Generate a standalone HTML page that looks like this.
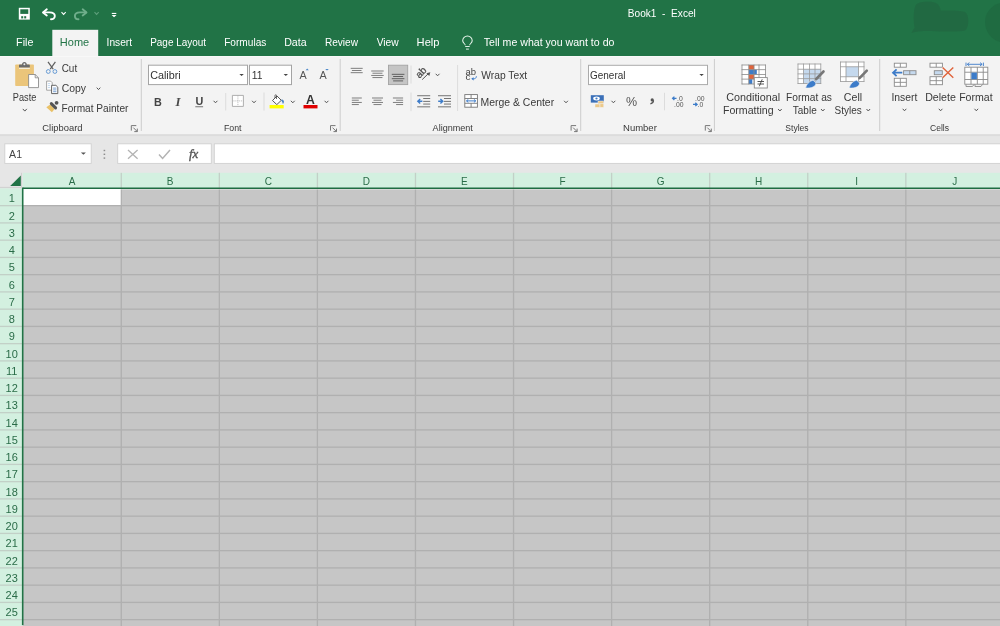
<!DOCTYPE html>
<html><head><meta charset="utf-8">
<style>
*{margin:0;padding:0}
html,body{width:1000px;height:626px;overflow:hidden;background:#e6e6e6}
svg{display:block;will-change:transform;font-family:"Liberation Sans",sans-serif}
</style></head><body>
<svg width="1000" height="626" viewBox="0 0 1000 626"><rect x="0" y="0" width="1000" height="56" fill="#217346"/><path d="M911.3 33 L914.6 27.5 C913.2 22 913.4 9 915.8 5 C918 2.2 923 1.8 929 1.8 C936 1.8 939.5 4 940.8 10.6 C950 10.4 959 10.4 964.5 11.8 C969.5 13.5 969.5 28 965 30.5 C960 32 946 31.6 936 31.2 C926 30.8 918 30.8 911.3 33 Z" fill="#216841" opacity="0.9"/><path d="M1000 3 C990 6 985 14 985 22 C985 32 992 40 1000 42 Z" fill="#1f6a41" opacity="0.85"/><rect x="18.8" y="7.8" width="11" height="11.8" fill="#fff"/><rect x="20.3" y="9.3" width="8" height="4.6" fill="#217346"/><rect x="21.2" y="16.2" width="2" height="2.2" fill="#217346"/><rect x="24.2" y="16.2" width="2" height="2.2" fill="#217346"/><path d="M43.5 12.4 H49.5 C52.8 12.4 54.8 14 54.8 16 C54.8 18 53 19.3 51 19.3" fill="none" stroke="#fff" stroke-width="1.9" stroke-linecap="round"/><path d="M46.8 9.3 L43 12.4 L46.8 15.4" fill="none" stroke="#fff" stroke-width="1.9" stroke-linecap="round" stroke-linejoin="round"/><path d="M61.50 12.20 L63.60 14.40 L65.70 12.20" fill="none" stroke="#fff" stroke-width="1.1"/><path d="M86 12.4 H80 C76.7 12.4 74.9 14 74.9 16 C74.9 18 76.5 19.3 78.5 19.3" fill="none" stroke="#6fae8b" stroke-width="1.9" stroke-linecap="round"/><path d="M82.7 9.3 L86.5 12.4 L82.7 15.4" fill="none" stroke="#6fae8b" stroke-width="1.9" stroke-linecap="round" stroke-linejoin="round"/><path d="M94.50 12.20 L96.60 14.40 L98.70 12.20" fill="none" stroke="#5e9f7b" stroke-width="1.1"/><rect x="111.8" y="12.9" width="4.5" height="1.1" fill="#fff"/><path d="M111.6 14.9 H116.5 L114.05 17.2 Z" fill="#fff"/><text x="627.79" y="17" font-size="10.2" fill="#fff" textLength="68.07" lengthAdjust="spacingAndGlyphs" >Book1 &#160;-&#160; Excel</text><rect x="52.3" y="29.8" width="45.9" height="27" fill="#f3f3f3"/><text x="16.14" y="46" font-size="10.3" fill="#fff" textLength="17.30" lengthAdjust="spacingAndGlyphs" >File</text><text x="106.58" y="46" font-size="10.3" fill="#fff" textLength="25.48" lengthAdjust="spacingAndGlyphs" >Insert</text><text x="150.20" y="46" font-size="10.3" fill="#fff" textLength="55.85" lengthAdjust="spacingAndGlyphs" >Page Layout</text><text x="224.19" y="46" font-size="10.3" fill="#fff" textLength="42.14" lengthAdjust="spacingAndGlyphs" >Formulas</text><text x="284.15" y="46" font-size="10.3" fill="#fff" textLength="22.52" lengthAdjust="spacingAndGlyphs" >Data</text><text x="324.89" y="46" font-size="10.3" fill="#fff" textLength="33.10" lengthAdjust="spacingAndGlyphs" >Review</text><text x="376.65" y="46" font-size="10.3" fill="#fff" textLength="22.05" lengthAdjust="spacingAndGlyphs" >View</text><text x="416.61" y="46" font-size="10.3" fill="#fff" textLength="22.85" lengthAdjust="spacingAndGlyphs" >Help</text><text x="483.79" y="46" font-size="10.3" fill="#fff" textLength="130.64" lengthAdjust="spacingAndGlyphs" >Tell me what you want to do</text><text x="59.82" y="46" font-size="10.3" fill="#217346" textLength="29.35" lengthAdjust="spacingAndGlyphs" >Home</text><path d="M465.3 45.3 C465.3 43.8 462.7 43 462.7 40.8 A4.75 4.75 0 1 1 472.2 40.8 C472.2 43 469.6 43.8 469.6 45.3" fill="none" stroke="#e8f5ec" stroke-width="1.05"/><path d="M465.2 46.5 H469.7 M466 49.1 H468.9" stroke="#e8f5ec" stroke-width="0.95"/><rect x="0" y="56" width="1000" height="78.2" fill="#f3f3f3"/><rect x="0" y="56" width="1000" height="1" fill="#f8f8f8"/><rect x="0" y="134" width="1000" height="38.5" fill="#e6e6e6"/><rect x="0" y="134.3" width="1000" height="1.8" fill="#dcdcdc"/><rect x="15.2" y="64.5" width="18.7" height="21.5" rx="0.8" fill="#ebc57a"/><rect x="19" y="67.5" width="10.8" height="1.4" fill="#f6f0e2"/><path d="M19 67.6 V65 C19 64.6 19.3 64.4 19.7 64.4 H22 C22 62.9 23 61.9 24.4 61.9 C25.8 61.9 26.8 62.9 26.8 64.4 H29.1 C29.5 64.4 29.8 64.6 29.8 65 V67.6 Z" fill="#6a6a6a"/><circle cx="24.4" cy="64.2" r="1" fill="#e8e8e8"/><path d="M28.6 74.5 H35.2 L38.5 77.8 V87.6 H28.6 Z" fill="#fff" stroke="#808080" stroke-width="0.8"/><path d="M35.2 74.5 V77.8 H38.5" fill="none" stroke="#808080" stroke-width="0.8"/><text x="12.86" y="100.8" font-size="10.3" fill="#3a3a3a" textLength="23.52" lengthAdjust="spacingAndGlyphs" >Paste</text><path d="M22.80 108.90 L24.80 111.10 L26.80 108.90" fill="none" stroke="#555" stroke-width="1"/><path d="M48 61.8 L53.2 69.2 M55.4 61.8 L50.2 69.2" stroke="#5f5f5f" stroke-width="1.2"/><circle cx="48.3" cy="71.5" r="1.9" fill="none" stroke="#5f96d2" stroke-width="0.95"/><circle cx="54.9" cy="71.5" r="1.9" fill="none" stroke="#5f96d2" stroke-width="0.95"/><text x="61.70" y="71.9" font-size="10.3" fill="#3a3a3a" textLength="15.46" lengthAdjust="spacingAndGlyphs" >Cut</text><path d="M46.6 81.1 H50.6 L52.2 82.7 V90.2 H46.6 Z" fill="#fff" stroke="#8f8f8f" stroke-width="0.8"/><path d="M47.9 83.6 H50.2 M47.9 85.6 H50.2 M47.9 87.6 H50.2" stroke="#a9c6e6" stroke-width="0.7"/><path d="M51.6 85.3 H55.9 L57.8 87.2 V93.6 H51.6 Z" fill="#fff" stroke="#555" stroke-width="0.9"/><path d="M53.1 88.1 H56.4 M53.1 89.9 H56.4 M53.1 91.7 H56.4" stroke="#5a8ac6" stroke-width="0.8"/><text x="61.68" y="91.6" font-size="10.3" fill="#3a3a3a" textLength="24.32" lengthAdjust="spacingAndGlyphs" >Copy</text><path d="M96.70 87.65 L98.50 89.55 L100.30 87.65" fill="none" stroke="#555" stroke-width="1"/><path d="M46.3 107.3 L50.2 104.6 L54.6 109.1 L51.9 112.3 Z" fill="#e9c168"/><path d="M51.3 103.6 L55.6 107.9" stroke="#555" stroke-width="3" stroke-linecap="round"/><circle cx="56.6" cy="102.8" r="1.9" fill="#555"/><text x="61.49" y="111.9" font-size="10.3" fill="#3a3a3a" textLength="66.95" lengthAdjust="spacingAndGlyphs" >Format Painter</text><text x="42.33" y="131.3" font-size="9.2" fill="#383838" textLength="40.24" lengthAdjust="spacingAndGlyphs" >Clipboard</text><path d="M131.3 130.6 V125.6 H136.3" fill="none" stroke="#777" stroke-width="1"/><path d="M133.3 127.6 L137.3 131.6 M137.3 128.6 V131.6 H134.3" fill="none" stroke="#777" stroke-width="1"/><rect x="140.8" y="59" width="1" height="72" fill="#cdcdcd"/><rect x="148.5" y="65.2" width="99" height="19.4" fill="#fff" stroke="#a4a4a4" stroke-width="1"/><rect x="249.5" y="65.2" width="42" height="19.4" fill="#fff" stroke="#a4a4a4" stroke-width="1"/><text x="150.16" y="78.7" font-size="10.3" fill="#333" textLength="30.59" lengthAdjust="spacingAndGlyphs" >Calibri</text><text x="251.8" y="78.7" font-size="10.3" fill="#333" >11</text><path d="M239.40 73.90 L243.80 73.90 L241.60 76.10 Z" fill="#444"/><path d="M283.60 73.90 L288.00 73.90 L285.80 76.10 Z" fill="#444"/><text x="299.60" y="78.9" font-size="11" fill="#555" textLength="7.22" lengthAdjust="spacingAndGlyphs" >A</text><path d="M305.6 70.2 L307.2 68.6 L308.8 70.2 Z" fill="#4a86c8"/><text x="319.60" y="79.3" font-size="11" fill="#555" textLength="7.22" lengthAdjust="spacingAndGlyphs" >A</text><path d="M325.2 68.9 L328.8 68.9 L327 70.5 Z" fill="#4a86c8"/><text x="154" y="105.8" font-size="10.8" fill="#444" font-weight="bold">B</text><text x="175.4" y="106.2" font-size="12.8" fill="#4a4a4a" font-weight="bold" font-style="italic" font-family="Liberation Serif">I</text><text x="195.5" y="105.2" font-size="10.8" fill="#444" font-weight="bold">U</text><rect x="195.3" y="106.4" width="7.8" height="0.8" fill="#555"/><path d="M213.60 100.80 L215.50 102.80 L217.40 100.80" fill="none" stroke="#555" stroke-width="1"/><rect x="225.2" y="93" width="1" height="17.5" fill="#dcdcdc"/><path d="M232.4 95.4 H243.4 V106.4 H232.4 Z" fill="#fff" stroke="#a6a6a6" stroke-width="0.9"/><path d="M237.9 95.4 V106.4 M232.4 100.9 H243.4" stroke="#b0b0b0" stroke-width="0.8" stroke-dasharray="1.2 0.9"/><path d="M252.10 100.80 L254.00 102.80 L255.90 100.80" fill="none" stroke="#555" stroke-width="1"/><rect x="263.5" y="92.5" width="1" height="18.099999999999994" fill="#dcdcdc"/><path d="M272.5 100.5 L277 96 L281.3 100.3 L276.8 104.6 Z" fill="#fff" stroke="#444" stroke-width="0.9"/><path d="M275 98 V95.5 C275 94.5 276.5 94.5 276.5 95.5 V99" fill="none" stroke="#444" stroke-width="0.8"/><path d="M281.3 100.3 C283.5 99 283.8 102 283 103.5" fill="#4a86c8" stroke="#4a86c8" stroke-width="1"/><rect x="269.6" y="105" width="14.1" height="3.4" fill="#ffff00"/><path d="M290.90 100.80 L292.80 102.80 L294.70 100.80" fill="none" stroke="#555" stroke-width="1"/><text x="306.00" y="104" font-size="12.4" fill="#333" textLength="8.83" lengthAdjust="spacingAndGlyphs" font-weight="bold">A</text><rect x="303.5" y="105" width="14" height="3.4" fill="#e00000"/><path d="M324.60 100.80 L326.50 102.80 L328.40 100.80" fill="none" stroke="#555" stroke-width="1"/><text x="224.00" y="131.3" font-size="9.2" fill="#383838" textLength="17.55" lengthAdjust="spacingAndGlyphs" >Font</text><path d="M330.5 130.6 V125.6 H335.5" fill="none" stroke="#777" stroke-width="1"/><path d="M332.5 127.6 L336.5 131.6 M336.5 128.6 V131.6 H333.5" fill="none" stroke="#777" stroke-width="1"/><rect x="339.7" y="59" width="1" height="72" fill="#cdcdcd"/><rect x="350.70" y="67.85" width="12" height="0.9" fill="#727272"/><rect x="351.90" y="70.05" width="9.6" height="0.9" fill="#727272"/><rect x="350.70" y="72.25" width="12" height="0.9" fill="#727272"/><rect x="371.20" y="70.55" width="12.5" height="0.9" fill="#727272"/><rect x="372.45" y="72.75" width="10" height="0.9" fill="#727272"/><rect x="371.20" y="74.95" width="12.5" height="0.9" fill="#727272"/><rect x="372.45" y="77.15" width="10" height="0.9" fill="#727272"/><rect x="388.5" y="65.2" width="19.2" height="19.4" fill="#c5c5c5" stroke="#a3a3a3" stroke-width="0.9"/><rect x="391.80" y="73.85" width="12.6" height="0.9" fill="#555"/><rect x="393.10" y="76.05" width="10" height="0.9" fill="#555"/><rect x="391.80" y="78.25" width="12.6" height="0.9" fill="#555"/><rect x="393.10" y="80.45" width="10" height="0.9" fill="#555"/><rect x="410.5" y="65.5" width="1" height="18.099999999999994" fill="#dcdcdc"/><text x="0" y="0" font-size="10" fill="#4a4a4a" stroke="#4a4a4a" stroke-width="0.25" transform="translate(419.4 78.8) rotate(-45)">ab</text><path d="M422.2 79.6 L428.6 73.4" fill="none" stroke="#555" stroke-width="1"/><path d="M430.3 72.2 L426.4 73.2 L429.3 76.1 Z" fill="#555"/><path d="M435.70 73.80 L437.60 75.80 L439.50 73.80" fill="none" stroke="#555" stroke-width="1"/><rect x="351.80" y="97.55" width="10" height="0.9" fill="#727272"/><rect x="351.80" y="99.75" width="7" height="0.9" fill="#727272"/><rect x="351.80" y="101.95" width="10" height="0.9" fill="#727272"/><rect x="351.80" y="104.15" width="7" height="0.9" fill="#727272"/><rect x="372.00" y="97.55" width="11" height="0.9" fill="#727272"/><rect x="373.50" y="99.75" width="8" height="0.9" fill="#727272"/><rect x="372.00" y="101.95" width="11" height="0.9" fill="#727272"/><rect x="373.50" y="104.15" width="8" height="0.9" fill="#727272"/><rect x="392.90" y="97.55" width="10.2" height="0.9" fill="#727272"/><rect x="396.10" y="99.75" width="7" height="0.9" fill="#727272"/><rect x="392.90" y="101.95" width="10.2" height="0.9" fill="#727272"/><rect x="396.10" y="104.15" width="7" height="0.9" fill="#727272"/><rect x="410.5" y="92.5" width="1" height="18.700000000000003" fill="#dcdcdc"/><rect x="417.2" y="95.3" width="13" height="0.9" fill="#666"/><rect x="417.2" y="106.4" width="13" height="0.9" fill="#666"/><rect x="423.2" y="98.1" width="7" height="0.9" fill="#666"/><rect x="423.2" y="100.9" width="7" height="0.9" fill="#666"/><rect x="423.2" y="103.6" width="7" height="0.9" fill="#666"/><path d="M422.4 101.3 H418.0 M420.2 99 L417.8 101.3 L420.2 103.6" fill="none" stroke="#3d7cc9" stroke-width="1.4"/><rect x="438" y="95.3" width="13" height="0.9" fill="#666"/><rect x="438" y="106.4" width="13" height="0.9" fill="#666"/><rect x="444" y="98.1" width="7" height="0.9" fill="#666"/><rect x="444" y="100.9" width="7" height="0.9" fill="#666"/><rect x="444" y="103.6" width="7" height="0.9" fill="#666"/><path d="M438.2 101.3 H442.6 M440.4 99 L442.8 101.3 L440.4 103.6" fill="none" stroke="#3d7cc9" stroke-width="1.4"/><rect x="457.1" y="65" width="1" height="46" fill="#dcdcdc"/><text x="465.42" y="74.6" font-size="8.6" fill="#444" textLength="10.58" lengthAdjust="spacingAndGlyphs" >ab</text><text x="465.40" y="79.6" font-size="8.6" fill="#444" textLength="4.94" lengthAdjust="spacingAndGlyphs" >c</text><path d="M476.4 76.2 C476.4 78 475.3 78.8 473.6 78.8 H472.4" fill="none" stroke="#3d7cc9" stroke-width="0.9"/><path d="M471.2 78.8 L473.6 77.2 L473.6 80.4 Z" fill="#3d7cc9"/><text x="481.35" y="78.8" font-size="10.3" fill="#3a3a3a" textLength="45.85" lengthAdjust="spacingAndGlyphs" >Wrap Text</text><rect x="464.8" y="94.6" width="12.6" height="12.6" fill="#fff" stroke="#777" stroke-width="0.9"/><path d="M464.8 98.5 H477.4 M464.8 103.3 H477.4 M471.1 94.6 V98.5 M471.1 103.3 V107.2" stroke="#777" stroke-width="0.9"/><path d="M466.5 100.9 H475.7 M468.3 99.4 L466.5 100.9 L468.3 102.4 M473.9 99.4 L475.7 100.9 L473.9 102.4" fill="none" stroke="#3d7cc9" stroke-width="1"/><text x="480.57" y="105.5" font-size="10.3" fill="#3a3a3a" textLength="73.58" lengthAdjust="spacingAndGlyphs" >Merge &amp; Center</text><path d="M564.10 100.80 L566.00 102.80 L567.90 100.80" fill="none" stroke="#555" stroke-width="1"/><text x="432.60" y="131.3" font-size="9.2" fill="#383838" textLength="40.26" lengthAdjust="spacingAndGlyphs" >Alignment</text><path d="M571.1 130.6 V125.6 H576.1" fill="none" stroke="#777" stroke-width="1"/><path d="M573.1 127.6 L577.1 131.6 M577.1 128.6 V131.6 H574.1" fill="none" stroke="#777" stroke-width="1"/><rect x="580.2" y="59" width="1" height="72" fill="#cdcdcd"/><rect x="588.5" y="65.3" width="119" height="19.3" fill="#fff" stroke="#aaa" stroke-width="1"/><text x="590.00" y="78.7" font-size="10.3" fill="#333" textLength="35.47" lengthAdjust="spacingAndGlyphs" >General</text><path d="M699.40 73.90 L703.80 73.90 L701.60 76.10 Z" fill="#444"/><rect x="590.8" y="95.2" width="13" height="7.4" fill="#3b70b8"/><ellipse cx="596.5" cy="98.5" rx="3.3" ry="1.9" fill="#fff"/><circle cx="596.5" cy="98.5" r="1.1" fill="#3d7cc9"/><rect x="598" y="101" width="5.5" height="3" fill="#ecc98a" stroke="#f3f3f3" stroke-width="0.5"/><rect x="595" y="104" width="5" height="3.4" fill="#ecc98a" stroke="#f3f3f3" stroke-width="0.5"/><rect x="600" y="103.8" width="3.8" height="3.6" fill="#ecc98a" stroke="#f3f3f3" stroke-width="0.5"/><path d="M611.50 100.80 L613.40 102.80 L615.30 100.80" fill="none" stroke="#555" stroke-width="1"/><text x="626" y="106.3" font-size="12.5" fill="#555" >%</text><circle cx="652.2" cy="99.9" r="1.6" fill="#555"/><path d="M653.5 100.2 C653.6 101.9 652.5 103.2 650.4 103.8" fill="none" stroke="#555" stroke-width="1.2"/><rect x="664.0" y="92.8" width="1" height="17.5" fill="#dcdcdc"/><path d="M676.5 98.3 H672.6 M674.4 96.6 L672.6 98.3 L674.4 100" fill="none" stroke="#3d7cc9" stroke-width="1.3"/><text x="677" y="101.2" font-size="6.8" fill="#555" >.0</text><text x="674" y="107" font-size="6.8" fill="#555" >.00</text><text x="695" y="101.2" font-size="6.8" fill="#555" >.00</text><path d="M693 104.4 H697 M695.3 102.7 L697.1 104.4 L695.3 106.1" fill="none" stroke="#3d7cc9" stroke-width="1.3"/><text x="697.6" y="107" font-size="6.8" fill="#555" >.0</text><text x="623.04" y="131.3" font-size="9.2" fill="#383838" textLength="33.77" lengthAdjust="spacingAndGlyphs" >Number</text><path d="M705.3 130.6 V125.6 H710.3" fill="none" stroke="#777" stroke-width="1"/><path d="M707.3 127.6 L711.3 131.6 M711.3 128.6 V131.6 H708.3" fill="none" stroke="#777" stroke-width="1"/><rect x="713.9" y="59" width="1" height="72" fill="#cdcdcd"/><rect x="742" y="65" width="23.5" height="19" fill="#fff"/><rect x="748.8" y="65" width="5.3" height="4.7" fill="#e0643c"/><rect x="748.8" y="69.7" width="8" height="4.7" fill="#3d7cc9"/><rect x="748.8" y="74.4" width="5.3" height="4.7" fill="#e0643c"/><rect x="748.8" y="79.1" width="3.5" height="4.9" fill="#3d7cc9"/><rect x="741.60" y="64.60" width="0.8" height="19.80" fill="#8a8a8a"/><rect x="748.40" y="64.60" width="0.8" height="19.80" fill="#8a8a8a"/><rect x="753.60" y="64.60" width="0.8" height="19.80" fill="#8a8a8a"/><rect x="758.60" y="64.60" width="0.8" height="19.80" fill="#8a8a8a"/><rect x="765.10" y="64.60" width="0.8" height="19.80" fill="#8a8a8a"/><rect x="741.60" y="64.60" width="24.30" height="0.8" fill="#8a8a8a"/><rect x="741.60" y="69.30" width="24.30" height="0.8" fill="#8a8a8a"/><rect x="741.60" y="74.00" width="24.30" height="0.8" fill="#8a8a8a"/><rect x="741.60" y="78.70" width="24.30" height="0.8" fill="#8a8a8a"/><rect x="741.60" y="83.60" width="24.30" height="0.8" fill="#8a8a8a"/><rect x="754.3" y="77.6" width="13" height="10.4" fill="#fff" stroke="#8a8a8a" stroke-width="0.9"/><path d="M757.5 81.5 H764 M757.5 84 H764 M762.2 79.3 L759.3 86.3" stroke="#444" stroke-width="0.9"/><text x="726.26" y="100.6" font-size="10.3" fill="#3a3a3a" textLength="53.88" lengthAdjust="spacingAndGlyphs" >Conditional</text><text x="722.95" y="114.3" font-size="10.3" fill="#3a3a3a" textLength="50.68" lengthAdjust="spacingAndGlyphs" >Formatting</text><path d="M778.10 109.00 L779.90 111.00 L781.70 109.00" fill="none" stroke="#555" stroke-width="1"/><rect x="798" y="64" width="22.8" height="19.5" fill="#fff"/><rect x="803.6" y="69.2" width="17.2" height="14.3" fill="#c5d9ee"/><rect x="797.60" y="63.60" width="0.8" height="20.30" fill="#999"/><rect x="803.20" y="63.60" width="0.8" height="20.30" fill="#999"/><rect x="809.00" y="63.60" width="0.8" height="20.30" fill="#999"/><rect x="814.60" y="63.60" width="0.8" height="20.30" fill="#999"/><rect x="820.40" y="63.60" width="0.8" height="20.30" fill="#999"/><rect x="797.60" y="63.60" width="23.60" height="0.8" fill="#999"/><rect x="797.60" y="68.80" width="23.60" height="0.8" fill="#999"/><rect x="797.60" y="73.50" width="23.60" height="0.8" fill="#999"/><rect x="797.60" y="78.30" width="23.60" height="0.8" fill="#999"/><rect x="797.60" y="83.10" width="23.60" height="0.8" fill="#999"/><path d="M823.5 71.5 L816.2 79" stroke="#777" stroke-width="2.6" stroke-linecap="round"/><path d="M805.6 88 C806.5 84 809.5 81 813 80.2 L816 83 C815.6 86.5 812 88.4 805.6 88 Z" fill="#3d7cc9" stroke="#f3f3f3" stroke-width="0.6"/><text x="786.08" y="100.6" font-size="10.3" fill="#3a3a3a" textLength="45.88" lengthAdjust="spacingAndGlyphs" >Format as</text><text x="792.80" y="114.3" font-size="10.3" fill="#3a3a3a" textLength="23.91" lengthAdjust="spacingAndGlyphs" >Table</text><path d="M821.00 109.00 L822.80 111.00 L824.60 109.00" fill="none" stroke="#555" stroke-width="1"/><rect x="840.5" y="62" width="23.5" height="19.4" fill="#fff"/><rect x="846" y="66.8" width="12.5" height="10" fill="#c5d9ee"/><rect x="840.10" y="61.60" width="0.8" height="20.20" fill="#999"/><rect x="845.60" y="61.60" width="0.8" height="20.20" fill="#999"/><rect x="858.10" y="61.60" width="0.8" height="20.20" fill="#999"/><rect x="863.60" y="61.60" width="0.8" height="20.20" fill="#999"/><rect x="840.10" y="61.60" width="24.30" height="0.8" fill="#999"/><rect x="840.10" y="66.40" width="24.30" height="0.8" fill="#999"/><rect x="840.10" y="76.40" width="24.30" height="0.8" fill="#999"/><rect x="840.10" y="81.00" width="24.30" height="0.8" fill="#999"/><path d="M866.8 70.6 L859.5 78.2" stroke="#777" stroke-width="2.6" stroke-linecap="round"/><path d="M849.2 88 C850.1 84 853.1 81 856.6 80.2 L859.6 83 C859.2 86.5 855.6 88.4 849.2 88 Z" fill="#3d7cc9" stroke="#f3f3f3" stroke-width="0.6"/><text x="843.87" y="100.6" font-size="10.3" fill="#3a3a3a" textLength="18.25" lengthAdjust="spacingAndGlyphs" >Cell</text><text x="834.55" y="114.3" font-size="10.3" fill="#3a3a3a" textLength="27.18" lengthAdjust="spacingAndGlyphs" >Styles</text><path d="M866.50 109.00 L868.30 111.00 L870.10 109.00" fill="none" stroke="#555" stroke-width="1"/><text x="785.32" y="131.3" font-size="9.2" fill="#383838" textLength="23.27" lengthAdjust="spacingAndGlyphs" >Styles</text><rect x="879.2" y="59" width="1" height="72" fill="#cdcdcd"/><rect x="894.3" y="63.2" width="12" height="4" fill="#fff" stroke="#8a8a8a" stroke-width="0.9"/><rect x="899.85" y="63.2" width="0.9" height="4" fill="#8a8a8a"/><rect x="903.6" y="70.7" width="12.4" height="4" fill="#c5d9ee" stroke="#8a8a8a" stroke-width="0.9"/><rect x="909.35" y="70.7" width="0.9" height="4" fill="#8a8a8a"/><path d="M902.3 72.7 H893.5 M896.6 69.3 L893 72.7 L896.6 76.1" fill="none" stroke="#3d7cc9" stroke-width="1.8"/><rect x="894.3" y="78.3" width="12" height="8" fill="#fff" stroke="#8a8a8a" stroke-width="0.9"/><rect x="899.85" y="78.3" width="0.9" height="8" fill="#8a8a8a"/><rect x="894.3" y="81.85" width="12" height="0.9" fill="#8a8a8a"/><text x="891.46" y="100.6" font-size="10.3" fill="#3a3a3a" textLength="26.00" lengthAdjust="spacingAndGlyphs" >Insert</text><path d="M902.70 108.80 L904.50 110.80 L906.30 108.80" fill="none" stroke="#555" stroke-width="1"/><rect x="930" y="63.2" width="12.4" height="4" fill="#fff" stroke="#8a8a8a" stroke-width="0.9"/><rect x="935.75" y="63.2" width="0.9" height="4" fill="#8a8a8a"/><rect x="934.3" y="70.7" width="8" height="4" fill="#c5d9ee" stroke="#8a8a8a" stroke-width="0.9"/><rect x="930" y="76.7" width="12.4" height="8" fill="#fff" stroke="#8a8a8a" stroke-width="0.9"/><rect x="935.75" y="76.7" width="0.9" height="8" fill="#8a8a8a"/><rect x="930" y="80.25" width="12.4" height="0.9" fill="#8a8a8a"/><path d="M942.6 67.4 L953.3 77.8 M953.3 67.4 L942.6 77.8" stroke="#f3f3f3" stroke-width="2.6"/><path d="M942.6 67.4 L953.3 77.8 M953.3 67.4 L942.6 77.8" stroke="#e0643c" stroke-width="1.4"/><text x="925.15" y="100.6" font-size="10.3" fill="#3a3a3a" textLength="30.79" lengthAdjust="spacingAndGlyphs" >Delete</text><path d="M938.80 108.80 L940.60 110.80 L942.40 108.80" fill="none" stroke="#555" stroke-width="1"/><path d="M966 62.6 V66 M983.4 62.6 V66 M967.3 64.3 H982.1 M969.4 62.6 L967.3 64.3 L969.4 66 M980 62.6 L982.1 64.3 L980 66" fill="none" stroke="#3d7cc9" stroke-width="0.9"/><rect x="964.8" y="67.2" width="23" height="17" fill="#fff" stroke="#8a8a8a" stroke-width="0.9"/><rect x="970.55" y="67.2" width="0.9" height="17" fill="#8a8a8a"/><rect x="976.8499999999999" y="67.2" width="0.9" height="17" fill="#8a8a8a"/><rect x="982.75" y="67.2" width="0.9" height="17" fill="#8a8a8a"/><rect x="964.8" y="71.75" width="23" height="0.9" fill="#8a8a8a"/><rect x="964.8" y="79.05" width="23" height="0.9" fill="#8a8a8a"/><rect x="971.4" y="72.6" width="5.5" height="6.6" fill="#3d7cc9"/><path d="M966 84.4 V86.5 H972.5 L974 84.4 M975 84.4 V86.5 H981 L982.5 84.4" fill="none" stroke="#8a8a8a" stroke-width="0.9"/><text x="959.15" y="100.6" font-size="10.3" fill="#3a3a3a" textLength="33.52" lengthAdjust="spacingAndGlyphs" >Format</text><path d="M974.50 108.80 L976.30 110.80 L978.10 108.80" fill="none" stroke="#555" stroke-width="1"/><text x="929.97" y="131.3" font-size="9.2" fill="#383838" textLength="19.01" lengthAdjust="spacingAndGlyphs" >Cells</text><rect x="4.8" y="143.8" width="86.4" height="19.6" fill="#fff" stroke="#d0d0d0" stroke-width="0.9"/><text x="9.10" y="158" font-size="10.2" fill="#444" textLength="12.91" lengthAdjust="spacingAndGlyphs" >A1</text><path d="M80.90 152.40 L85.90 152.40 L83.40 154.80 Z" fill="#555"/><rect x="103.6" y="149.8" width="1.6" height="1.4" fill="#8c8c8c"/><rect x="103.6" y="153.6" width="1.6" height="1.4" fill="#8c8c8c"/><rect x="103.6" y="157.4" width="1.6" height="1.4" fill="#8c8c8c"/><rect x="117.7" y="143.8" width="93.6" height="19.6" fill="#fff" stroke="#d0d0d0" stroke-width="0.9"/><path d="M128 150 L137.6 158.8 M137.6 150 L128 158.8" stroke="#b3b3b3" stroke-width="1.3"/><path d="M159 154.4 L162.6 158.4 L170 150" fill="none" stroke="#b3b3b3" stroke-width="1.5"/><text x="189" y="157.6" font-size="13" fill="#555" font-family="Liberation Serif" font-style="italic" stroke="#555" stroke-width="0.35">fx</text><rect x="214.3" y="143.8" width="800" height="19.6" fill="#fff" stroke="#d0d0d0" stroke-width="0.9"/><rect x="0" y="172.8" width="22.8" height="15.599999999999994" fill="#e6e6e6"/><path d="M10.2 186 L20.8 186 L20.8 175.4 Z" fill="#217346"/><rect x="22.8" y="172.8" width="977.2" height="15.599999999999994" fill="#d3f0e0"/><rect x="0" y="188.4" width="22.8" height="437.6" fill="#d3f0e0"/><rect x="22.8" y="188.4" width="977.2" height="437.6" fill="#c6c6c6"/><rect x="120.62" y="172.8" width="1.3" height="15.599999999999994" fill="#c2d0c7"/><rect x="120.62" y="188.4" width="1.3" height="437.6" fill="#b0b0b0"/><rect x="218.69" y="172.8" width="1.3" height="15.599999999999994" fill="#c2d0c7"/><rect x="218.69" y="188.4" width="1.3" height="437.6" fill="#b0b0b0"/><rect x="316.76" y="172.8" width="1.3" height="15.599999999999994" fill="#c2d0c7"/><rect x="316.76" y="188.4" width="1.3" height="437.6" fill="#b0b0b0"/><rect x="414.83" y="172.8" width="1.3" height="15.599999999999994" fill="#c2d0c7"/><rect x="414.83" y="188.4" width="1.3" height="437.6" fill="#b0b0b0"/><rect x="512.90" y="172.8" width="1.3" height="15.599999999999994" fill="#c2d0c7"/><rect x="512.90" y="188.4" width="1.3" height="437.6" fill="#b0b0b0"/><rect x="610.97" y="172.8" width="1.3" height="15.599999999999994" fill="#c2d0c7"/><rect x="610.97" y="188.4" width="1.3" height="437.6" fill="#b0b0b0"/><rect x="709.04" y="172.8" width="1.3" height="15.599999999999994" fill="#c2d0c7"/><rect x="709.04" y="188.4" width="1.3" height="437.6" fill="#b0b0b0"/><rect x="807.11" y="172.8" width="1.3" height="15.599999999999994" fill="#c2d0c7"/><rect x="807.11" y="188.4" width="1.3" height="437.6" fill="#b0b0b0"/><rect x="905.18" y="172.8" width="1.3" height="15.599999999999994" fill="#c2d0c7"/><rect x="905.18" y="188.4" width="1.3" height="437.6" fill="#b0b0b0"/><rect x="0" y="205.00" width="22.8" height="1.3" fill="#c2d0c7"/><rect x="22.8" y="205.00" width="977.2" height="1.3" fill="#b0b0b0"/><rect x="0" y="222.25" width="22.8" height="1.3" fill="#c2d0c7"/><rect x="22.8" y="222.25" width="977.2" height="1.3" fill="#b0b0b0"/><rect x="0" y="239.50" width="22.8" height="1.3" fill="#c2d0c7"/><rect x="22.8" y="239.50" width="977.2" height="1.3" fill="#b0b0b0"/><rect x="0" y="256.75" width="22.8" height="1.3" fill="#c2d0c7"/><rect x="22.8" y="256.75" width="977.2" height="1.3" fill="#b0b0b0"/><rect x="0" y="274.00" width="22.8" height="1.3" fill="#c2d0c7"/><rect x="22.8" y="274.00" width="977.2" height="1.3" fill="#b0b0b0"/><rect x="0" y="291.25" width="22.8" height="1.3" fill="#c2d0c7"/><rect x="22.8" y="291.25" width="977.2" height="1.3" fill="#b0b0b0"/><rect x="0" y="308.50" width="22.8" height="1.3" fill="#c2d0c7"/><rect x="22.8" y="308.50" width="977.2" height="1.3" fill="#b0b0b0"/><rect x="0" y="325.75" width="22.8" height="1.3" fill="#c2d0c7"/><rect x="22.8" y="325.75" width="977.2" height="1.3" fill="#b0b0b0"/><rect x="0" y="343.00" width="22.8" height="1.3" fill="#c2d0c7"/><rect x="22.8" y="343.00" width="977.2" height="1.3" fill="#b0b0b0"/><rect x="0" y="360.25" width="22.8" height="1.3" fill="#c2d0c7"/><rect x="22.8" y="360.25" width="977.2" height="1.3" fill="#b0b0b0"/><rect x="0" y="377.50" width="22.8" height="1.3" fill="#c2d0c7"/><rect x="22.8" y="377.50" width="977.2" height="1.3" fill="#b0b0b0"/><rect x="0" y="394.75" width="22.8" height="1.3" fill="#c2d0c7"/><rect x="22.8" y="394.75" width="977.2" height="1.3" fill="#b0b0b0"/><rect x="0" y="412.00" width="22.8" height="1.3" fill="#c2d0c7"/><rect x="22.8" y="412.00" width="977.2" height="1.3" fill="#b0b0b0"/><rect x="0" y="429.25" width="22.8" height="1.3" fill="#c2d0c7"/><rect x="22.8" y="429.25" width="977.2" height="1.3" fill="#b0b0b0"/><rect x="0" y="446.50" width="22.8" height="1.3" fill="#c2d0c7"/><rect x="22.8" y="446.50" width="977.2" height="1.3" fill="#b0b0b0"/><rect x="0" y="463.75" width="22.8" height="1.3" fill="#c2d0c7"/><rect x="22.8" y="463.75" width="977.2" height="1.3" fill="#b0b0b0"/><rect x="0" y="481.00" width="22.8" height="1.3" fill="#c2d0c7"/><rect x="22.8" y="481.00" width="977.2" height="1.3" fill="#b0b0b0"/><rect x="0" y="498.25" width="22.8" height="1.3" fill="#c2d0c7"/><rect x="22.8" y="498.25" width="977.2" height="1.3" fill="#b0b0b0"/><rect x="0" y="515.50" width="22.8" height="1.3" fill="#c2d0c7"/><rect x="22.8" y="515.50" width="977.2" height="1.3" fill="#b0b0b0"/><rect x="0" y="532.75" width="22.8" height="1.3" fill="#c2d0c7"/><rect x="22.8" y="532.75" width="977.2" height="1.3" fill="#b0b0b0"/><rect x="0" y="550.00" width="22.8" height="1.3" fill="#c2d0c7"/><rect x="22.8" y="550.00" width="977.2" height="1.3" fill="#b0b0b0"/><rect x="0" y="567.25" width="22.8" height="1.3" fill="#c2d0c7"/><rect x="22.8" y="567.25" width="977.2" height="1.3" fill="#b0b0b0"/><rect x="0" y="584.50" width="22.8" height="1.3" fill="#c2d0c7"/><rect x="22.8" y="584.50" width="977.2" height="1.3" fill="#b0b0b0"/><rect x="0" y="601.75" width="22.8" height="1.3" fill="#c2d0c7"/><rect x="22.8" y="601.75" width="977.2" height="1.3" fill="#b0b0b0"/><rect x="0" y="619.00" width="22.8" height="1.3" fill="#c2d0c7"/><rect x="22.8" y="619.00" width="977.2" height="1.3" fill="#b0b0b0"/><rect x="0" y="636.25" width="22.8" height="1.3" fill="#c2d0c7"/><rect x="22.8" y="636.25" width="977.2" height="1.3" fill="#b0b0b0"/><rect x="22.8" y="188.4" width="97.82" height="16.6" fill="#fff"/><rect x="22.8" y="189.0" width="977.2" height="0.9" fill="#fff" opacity="0.35"/><rect x="22.8" y="187.5" width="977.2" height="1.5" fill="#1f6c42"/><rect x="21.900000000000002" y="187.5" width="1.6" height="437.6" fill="#217346"/><rect x="0" y="186.9" width="21.900000000000002" height="1" fill="#d0d0d0"/><rect x="21.0" y="172.8" width="1" height="14.699999999999994" fill="#d0d0d0"/><text x="68.79" y="185.2" font-size="11.4" fill="#2a6c48" textLength="6.69" lengthAdjust="spacingAndGlyphs">A</text><text x="166.86" y="185.2" font-size="11.4" fill="#2a6c48" textLength="6.69" lengthAdjust="spacingAndGlyphs">B</text><text x="264.65" y="185.2" font-size="11.4" fill="#2a6c48" textLength="7.24" lengthAdjust="spacingAndGlyphs">C</text><text x="362.72" y="185.2" font-size="11.4" fill="#2a6c48" textLength="7.24" lengthAdjust="spacingAndGlyphs">D</text><text x="461.07" y="185.2" font-size="11.4" fill="#2a6c48" textLength="6.69" lengthAdjust="spacingAndGlyphs">E</text><text x="559.42" y="185.2" font-size="11.4" fill="#2a6c48" textLength="6.13" lengthAdjust="spacingAndGlyphs">F</text><text x="656.65" y="185.2" font-size="11.4" fill="#2a6c48" textLength="7.80" lengthAdjust="spacingAndGlyphs">G</text><text x="755.00" y="185.2" font-size="11.4" fill="#2a6c48" textLength="7.24" lengthAdjust="spacingAndGlyphs">H</text><text x="855.30" y="185.2" font-size="11.4" fill="#2a6c48" textLength="2.79" lengthAdjust="spacingAndGlyphs">I</text><text x="952.26" y="185.2" font-size="11.4" fill="#2a6c48" textLength="5.02" lengthAdjust="spacingAndGlyphs">J</text><text x="11.7" y="202.35" text-anchor="middle" font-size="11" fill="#2a6c48">1</text><text x="11.7" y="219.60" text-anchor="middle" font-size="11" fill="#2a6c48">2</text><text x="11.7" y="236.85" text-anchor="middle" font-size="11" fill="#2a6c48">3</text><text x="11.7" y="254.10" text-anchor="middle" font-size="11" fill="#2a6c48">4</text><text x="11.7" y="271.35" text-anchor="middle" font-size="11" fill="#2a6c48">5</text><text x="11.7" y="288.60" text-anchor="middle" font-size="11" fill="#2a6c48">6</text><text x="11.7" y="305.85" text-anchor="middle" font-size="11" fill="#2a6c48">7</text><text x="11.7" y="323.10" text-anchor="middle" font-size="11" fill="#2a6c48">8</text><text x="11.7" y="340.35" text-anchor="middle" font-size="11" fill="#2a6c48">9</text><text x="11.7" y="357.60" text-anchor="middle" font-size="11" fill="#2a6c48">10</text><text x="11.7" y="374.85" text-anchor="middle" font-size="11" fill="#2a6c48">11</text><text x="11.7" y="392.10" text-anchor="middle" font-size="11" fill="#2a6c48">12</text><text x="11.7" y="409.35" text-anchor="middle" font-size="11" fill="#2a6c48">13</text><text x="11.7" y="426.60" text-anchor="middle" font-size="11" fill="#2a6c48">14</text><text x="11.7" y="443.85" text-anchor="middle" font-size="11" fill="#2a6c48">15</text><text x="11.7" y="461.10" text-anchor="middle" font-size="11" fill="#2a6c48">16</text><text x="11.7" y="478.35" text-anchor="middle" font-size="11" fill="#2a6c48">17</text><text x="11.7" y="495.60" text-anchor="middle" font-size="11" fill="#2a6c48">18</text><text x="11.7" y="512.85" text-anchor="middle" font-size="11" fill="#2a6c48">19</text><text x="11.7" y="530.10" text-anchor="middle" font-size="11" fill="#2a6c48">20</text><text x="11.7" y="547.35" text-anchor="middle" font-size="11" fill="#2a6c48">21</text><text x="11.7" y="564.60" text-anchor="middle" font-size="11" fill="#2a6c48">22</text><text x="11.7" y="581.85" text-anchor="middle" font-size="11" fill="#2a6c48">23</text><text x="11.7" y="599.10" text-anchor="middle" font-size="11" fill="#2a6c48">24</text><text x="11.7" y="616.35" text-anchor="middle" font-size="11" fill="#2a6c48">25</text></svg>
</body></html>
